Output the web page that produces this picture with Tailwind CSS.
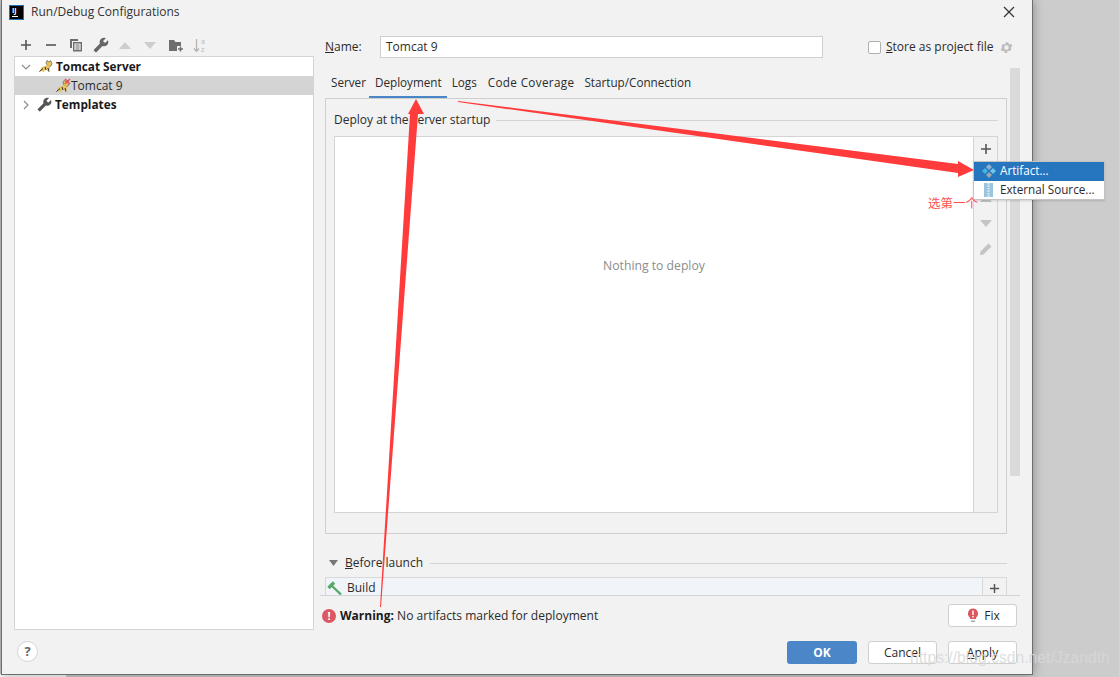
<!DOCTYPE html>
<html>
<head>
<meta charset="utf-8">
<script src="https://cdn.jsdelivr.net/npm/@tailwindcss/browser@4"></script>
</head>
<body class="m-0">
<div class="relative w-[1119px] h-[677px] overflow-hidden bg-[#cccccc] font-['Open_Sans','Noto_Sans',sans-serif] text-[12px] text-[#2b2b2b]">
  <div class="absolute left-0 bottom-0 w-[66px] h-[3px] bg-white"></div>
  <div class="relative ml-px w-[1032px] h-[675px] box-border border-l border-r border-b border-[#6e6e6e] bg-[#f2f2f2] shadow-[0_0_10px_rgba(0,0,0,0.35)] flex flex-col">
    <!-- title -->
    <div class="h-[24px] flex items-center justify-between pl-[7px] pr-[17px]">
      <div class="flex items-center gap-[7px]">
        <div class="relative w-[15px] h-[15px] bg-black border border-[#1f6fb5]">
          <span class="absolute left-[2px] top-[1px] text-[7px] leading-[8px] font-bold text-white">IJ</span>
          <div class="absolute left-[2px] bottom-[2px] w-[6px] h-px bg-white"></div>
        </div>
        <span class="text-[12px] text-[#333]">Run/Debug Configurations</span>
      </div>
      <svg width="12" height="12" viewBox="0 0 12 12"><path d="M1 1L11 11M11 1L1 11" stroke="#333" stroke-width="1.2"/></svg>
    </div>
    <!-- main -->
    <div class="flex h-[606px] pl-[12px]">
      <!-- left -->
      <div class="w-[300px] flex flex-col">
        <div class="h-[32px] pt-[10px] flex">
          <div class="w-[24px] h-[22px] flex items-center justify-center"><svg width="12" height="12" viewBox="0 0 12 12"><path d="M6 1V11M1 6H11" stroke="#555" stroke-width="1.6"/></svg></div>
          <div class="w-[26px] h-[22px] flex items-center justify-center"><svg width="12" height="12" viewBox="0 0 12 12"><path d="M1 6H11" stroke="#555" stroke-width="1.6"/></svg></div>
          <div class="w-[24px] h-[22px] flex items-center justify-center"><svg width="14" height="14" viewBox="0 0 14 14"><path d="M1 1H9V3H3V10H1Z" fill="#6e6e6e"/><path d="M4.7 4.7H12.3V12.8H4.7Z" fill="#f2f2f2" stroke="#6e6e6e" stroke-width="1.4"/><path d="M6.5 7H10.5M6.5 9H10.5M6.5 11H10.5" stroke="#6e6e6e" stroke-width="1"/></svg></div>
          <div class="w-[26px] h-[22px] flex items-center justify-center"><svg width="16" height="16" viewBox="0 0 24 24"><g transform="translate(24 0) scale(-1 1)"><path fill="#666" d="M22.7 19l-9.1-9.1c.9-2.3.4-5-1.5-6.9-2-2-5-2.4-7.4-1.3L9 6 6 9 1.6 4.7C.4 7.1.9 10.1 2.9 12.1c1.9 1.9 4.6 2.4 6.9 1.5l9.1 9.1c.4.4 1 .4 1.4 0l2.3-2.3c.5-.4.5-1.1.1-1.4z"/></g></svg></div>
          <div class="w-[22px] h-[22px] flex items-center justify-center"><svg width="12" height="7" viewBox="0 0 12 7"><path d="M6 0L12 7H0Z" fill="#cdcdcd"/></svg></div>
          <div class="w-[28px] h-[22px] flex items-center justify-center"><svg width="12" height="7" viewBox="0 0 12 7"><path d="M0 0H12L6 7Z" fill="#cdcdcd"/></svg></div>
          <div class="w-[24px] h-[22px] flex items-center justify-center"><svg width="15" height="13" viewBox="0 0 15 13"><path d="M0 1H5L6.5 3H12V7H8V12H0Z" fill="#6e6e6e"/><path d="M11.5 7.5V12.5M9 10H14" stroke="#6e6e6e" stroke-width="1.5"/></svg></div>
          <div class="w-[24px] h-[22px] flex items-center justify-center"><svg width="14" height="15" viewBox="0 0 14 15"><path d="M3.5 1V13M1 10.5L3.5 13.5L6 10.5" stroke="#b5b5b5" stroke-width="1.3" fill="none"/><text x="8" y="6" font-size="7" fill="#b5b5b5" font-family="Open Sans">a</text><text x="8" y="13.5" font-size="7" fill="#b5b5b5" font-family="Open Sans">z</text></svg></div>
        </div>
        <div class="flex-1 bg-white border border-[#d4d4d4] flex flex-col">
          <div class="h-[19px] flex items-center">
            <svg width="10" height="6" viewBox="0 0 10 6" class="ml-[6px]"><path d="M1 1L5 5L9 1" stroke="#8a8a8a" stroke-width="1.1" fill="none"/></svg>
            <svg width="15" height="13" viewBox="0 0 15 13" class="ml-[7px]"><path d="M8 3L9 0.5L11 2L12.5 0.5L14 3.5L13 6L10 7Z" fill="#e6c35c" stroke="#4a4a4a" stroke-width="0.6"/><path d="M10 5L4 7L1 12L4 10.5L5 12.5L8 9.5L11 12L12 7Z" fill="#e6c35c"/><path d="M1.5 11.5L5 8.5M7 7L8 10M10 8L11 11.5" stroke="#333" stroke-width="1" fill="none"/></svg>
            <span class="ml-[3px] text-[11.8px] font-bold text-[#1a1a1a]">Tomcat Server</span>
          </div>
          <div class="h-[19px] flex items-center bg-[#d4d4d4]">
            <svg width="16" height="15" viewBox="0 0 16 15" class="ml-[40px]"><g transform="translate(0 2)"><path d="M8 3L9 0.5L11 2L12.5 0.5L14 3.5L13 6L10 7Z" fill="#e6c35c" stroke="#4a4a4a" stroke-width="0.6"/><path d="M10 5L4 7L1 12L4 10.5L5 12.5L8 9.5L11 12L12 7Z" fill="#e6c35c"/><path d="M1.5 11.5L5 8.5M7 7L8 10M10 8L11 11.5" stroke="#333" stroke-width="1" fill="none"/></g><path d="M10 1L15 6M15 1L10 6" stroke="#e8505b" stroke-width="1.5"/></svg>
            <span>Tomcat 9</span>
          </div>
          <div class="h-[19px] flex items-center">
            <svg width="6" height="10" viewBox="0 0 6 10" class="ml-[8px]"><path d="M1 1L5 5L1 9" stroke="#8a8a8a" stroke-width="1.1" fill="none"/></svg>
            <svg width="15" height="15" viewBox="0 0 24 24" class="ml-[8px]"><g transform="translate(24 0) scale(-1 1)"><path fill="#555" d="M22.7 19l-9.1-9.1c.9-2.3.4-5-1.5-6.9-2-2-5-2.4-7.4-1.3L9 6 6 9 1.6 4.7C.4 7.1.9 10.1 2.9 12.1c1.9 1.9 4.6 2.4 6.9 1.5l9.1 9.1c.4.4 1 .4 1.4 0l2.3-2.3c.5-.4.5-1.1.1-1.4z"/></g></svg>
            <span class="ml-[3px] text-[11.8px] font-bold text-[#1a1a1a]">Templates</span>
          </div>
        </div>
      </div>
      <!-- right -->
      <div class="ml-[11px] w-[695px] flex flex-col">
        <div class="h-[44px] pt-[12px] flex items-start">
          <div class="h-[22px] w-[55px] flex items-center"><span><span class="underline">N</span>ame:</span></div>
          <div class="w-[443px] h-[22px] bg-white border border-[#cfcfcf] pl-[5px] flex items-center">Tomcat 9</div>
          <div class="h-[22px] ml-[45px] flex items-center">
            <div class="w-[13px] h-[13px] bg-white border border-[#b0b0b0] rounded-[2px]"></div>
            <span class="ml-[5px]"><span class="underline">S</span>tore as project file</span>
            <svg width="15" height="15" viewBox="0 0 24 24" class="ml-[5px]"><path fill="#bdbdbd" d="M19.4 13a7.8 7.8 0 0 0 0-2l2.1-1.6-2-3.4-2.5 1a7.6 7.6 0 0 0-1.7-1l-.4-2.6h-4l-.4 2.6a7.6 7.6 0 0 0-1.7 1l-2.5-1-2 3.4L4.6 11a7.8 7.8 0 0 0 0 2l-2.1 1.6 2 3.4 2.5-1a7.6 7.6 0 0 0 1.7 1l.4 2.6h4l.4-2.6a7.6 7.6 0 0 0 1.7-1l2.5 1 2-3.4zM12 15.5a3.5 3.5 0 1 1 0-7 3.5 3.5 0 0 1 0 7z"/></svg>
          </div>
        </div>
        <div class="h-[527px] flex">
          <div class="w-[682px] flex flex-col overflow-hidden">
            <div class="mt-[7px] h-[24px] flex items-start shrink-0 text-[11.7px] leading-[15px]">
              <div class="h-[24px] pl-[6px] pr-[3px]">Server</div>
              <div class="h-[24px] pl-[6px] pr-[5px] border-b-[3px] border-[#4a86c7]">Deployment</div>
              <div class="h-[24px] pl-[5px] pr-[6px]">Logs</div>
              <div class="h-[24px] px-[5px] tracking-[0.35px]">Code Coverage</div>
              <div class="h-[24px] px-[5px]">Startup/Connection</div>
            </div>
            <div class="mt-[-1px] h-[436px] shrink-0 border border-[#cfcfcf] px-[8px] pt-[13px] flex flex-col">
              <div class="h-[16px] flex items-center shrink-0">
                <span>Deploy at the server startup</span>
                <div class="flex-1 h-px bg-[#d4d4d4] ml-[6px]"></div>
              </div>
              <div class="mt-[8px] h-[377px] border border-[#d4d4d4] flex">
                <div class="flex-1 bg-white flex items-center justify-center text-[#8c8c8c] text-[12.2px]"><span class="relative top-[-58px]">Nothing to deploy</span></div>
                <div class="w-[24px] border-l border-[#d4d4d4] flex flex-col items-center">
                  <div class="h-[24px] flex items-center"><svg width="12" height="12" viewBox="0 0 12 12"><path d="M6 1V11M1 6H11" stroke="#555" stroke-width="1.6"/></svg></div>
                  <div class="h-[25px] flex items-center"><svg width="12" height="12" viewBox="0 0 12 12"><path d="M1 6H11" stroke="#bbb" stroke-width="1.6"/></svg></div>
                  <div class="h-[25px] flex items-center"><svg width="12" height="7" viewBox="0 0 12 7"><path d="M6 0L12 7H0Z" fill="#c4c4c4"/></svg></div>
                  <div class="h-[25px] flex items-center"><svg width="12" height="7" viewBox="0 0 12 7"><path d="M0 0H12L6 7Z" fill="#c4c4c4"/></svg></div>
                  <div class="h-[25px] flex items-center"><svg width="14" height="14" viewBox="0 0 14 14"><path d="M1 13L1.5 9.5L9.5 1.5L12.5 4.5L4.5 12.5Z" fill="#c4c4c4"/></svg></div>
                </div>
              </div>
            </div>
            <div class="mt-[21px] h-[16px] flex items-center shrink-0">
              <svg width="9" height="6" viewBox="0 0 9 6" class="ml-[4px]"><path d="M0 0H9L4.5 6Z" fill="#777"/></svg>
              <span class="ml-[7px]"><span class="underline">B</span>efore launch</span>
              <div class="flex-1 h-px bg-[#d4d4d4] ml-[7px]"></div>
            </div>
            <div class="mt-[6px] h-[22px] shrink-0 border border-[#d8d8d8] flex">
              <div class="flex-1 bg-[#f1f5fa] flex items-center">
                <svg width="15" height="15" viewBox="0 0 15 15" class="ml-[1px]"><path d="M1.5 7L7 1.5" stroke="#59a869" stroke-width="3.4" fill="none"/><path d="M4.5 4.5L14 13.5" stroke="#59a869" stroke-width="2.4" fill="none"/></svg>
                <span class="ml-[5px]">Build</span>
              </div>
              <div class="w-[24px] border-l border-[#d8d8d8] flex items-center justify-center"><svg width="11" height="11" viewBox="0 0 12 12"><path d="M6 1V11M1 6H11" stroke="#555" stroke-width="1.6"/></svg></div>
            </div>
          </div>
          <div class="ml-[3px] w-[10px] h-[408px] bg-[#dadada]"></div>
        </div>
        <div class="relative ml-[-5px] w-[700px] border-t border-[#d4d4d4] pt-[8px] flex justify-between items-start bg-[#f2f2f2]">
          <div class="h-[23px] flex items-center pl-[2px]">
            <div class="w-[14px] h-[14px] rounded-full bg-[#db5860] flex items-center justify-center text-white text-[11px] font-bold leading-none">!</div>
            <span class="ml-[4px] mt-[2px]"><b class="text-[#1a1a1a]">Warning:</b> <span class="text-[12.05px]">No artifacts marked for deployment</span></span>
          </div>
          <div class="w-[69px] h-[23px] mr-[3px] bg-white border border-[#cfcfcf] rounded-[3px] flex items-center justify-center gap-[5px] pl-[2px]">
            <svg width="12" height="15" viewBox="0 0 12 15"><path d="M6 0.5A5 5 0 0 1 9 9.5V11H3V9.5A5 5 0 0 1 6 0.5Z" fill="#db5860"/><path d="M4 12.5H8V14H4Z" fill="#aaa"/><path d="M6 2.5V7M6 8V9.5" stroke="#fff" stroke-width="1.4"/></svg>
            <span>Fix</span>
          </div>
        </div>
      </div>
    </div>
    <!-- footer -->
    <div class="pt-[11px] pl-[15px] pr-[15px] flex justify-between items-start">
      <div class="w-[21px] h-[21px] rounded-full bg-white border border-[#d4d4d4] flex items-center justify-center font-bold text-[#666] text-[13px]">?</div>
      <div class="flex gap-[11px]">
        <div class="w-[70px] h-[23px] bg-[#4a86c8] rounded-[3px] flex items-center justify-center text-white font-bold">OK</div>
        <div class="w-[69px] h-[23px] bg-white border border-[#cfcfcf] rounded-[3px] flex items-center justify-center">Cancel</div>
        <div class="w-[69px] h-[23px] bg-white border border-[#cfcfcf] rounded-[3px] flex items-center justify-center"><span><span class="underline">A</span>pply</span></div>
      </div>
    </div>
  </div>

  <!-- popup menu -->
  <div class="absolute left-[973px] top-[161px] w-[132px] h-[39px] bg-white border border-[#c4c4c4] flex flex-col text-[11.7px] shadow-[0_1px_2px_rgba(0,0,0,0.15)]">
    <div class="h-[19px] bg-[#2675bf] flex items-center text-white">
      <svg width="14" height="14" viewBox="0 0 14 14" class="ml-[8px]"><path d="M7 0L10 3L7 6L4 3Z" fill="#8fb3cf"/><path d="M3 4L6 7L3 10L0 7Z" fill="#40b6e0"/><path d="M11 4L14 7L11 10L8 7Z" fill="#6fc3e6"/><path d="M7 8L10 11L7 14L4 11Z" fill="#9aa7b0"/></svg>
      <span class="ml-[4px]">Artifact...</span>
    </div>
    <div class="h-[19px] flex items-center">
      <svg width="9" height="14" viewBox="0 0 9 14" class="ml-[10px]"><rect width="9" height="14" fill="#9cc5de"/><path d="M4.5 0V14" stroke="#e4eef5" stroke-width="2" stroke-dasharray="1.5 1"/></svg>
      <span class="ml-[7px]">External Source...</span>
    </div>
  </div>

  <!-- annotation arrows -->
  <svg class="absolute left-0 top-0 pointer-events-none" width="1119" height="677" viewBox="0 0 1119 677">
    <path d="M380 607L410 114L408 114L416 99L424 114L418 114L381 607Z" fill="#ff3b3b"/>
    <path d="M458 101L958 164L958 161L974 170L958 177L958 173L458 102Z" fill="#ff3b3b"/>
  </svg>
  <span class="absolute left-[928px] top-[194px] text-[12.5px] leading-[17px] text-[#ff5050] font-['Noto_Sans_CJK_SC',sans-serif]">选第一个</span>
  <span class="absolute left-[910px] top-[648px] text-[15.7px] leading-[20px] text-[#d8d8d8]/85 font-['Liberation_Sans',sans-serif]">https://blog.csdn.net/Jzandth</span>
</div>
</body>
</html>
